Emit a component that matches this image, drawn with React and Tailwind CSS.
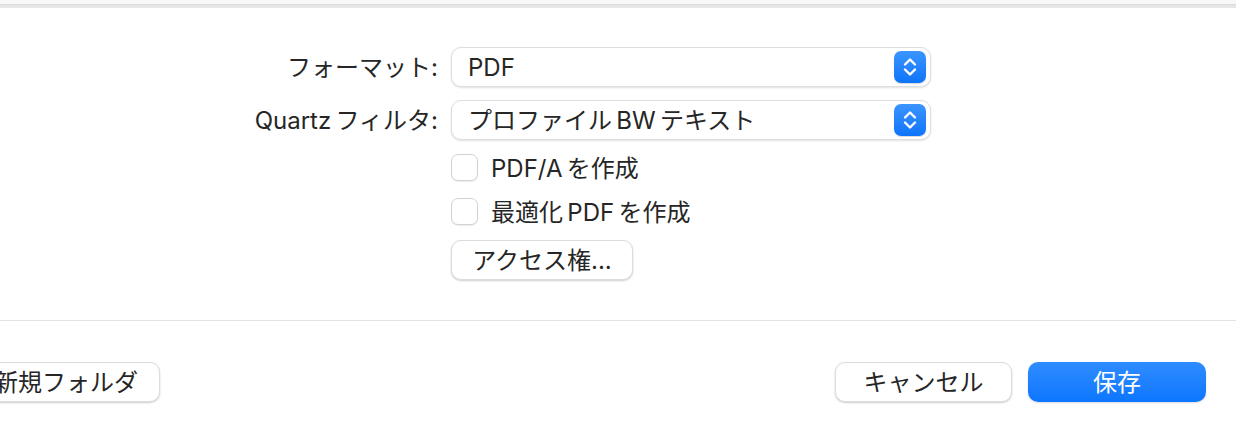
const font = {
  fontFamily: 'Inter, "Noto Sans CJK JP", sans-serif',
};

function Stepper() {
  return (
    <span className="flex h-[32px] w-[32px] items-center justify-center rounded-[7px] bg-gradient-to-b from-[#3a95ff] to-[#0b74fa] shadow-[0_1px_1px_rgba(0,0,0,0.15)]">
      <svg width="18" height="24" viewBox="0 0 18 24" fill="none">
        <path d="M4 9.5 L9 4.5 L14 9.5" stroke="white" strokeWidth="2.4" strokeLinecap="round" strokeLinejoin="round" />
        <path d="M4 14.5 L9 19.5 L14 14.5" stroke="white" strokeWidth="2.4" strokeLinecap="round" strokeLinejoin="round" />
      </svg>
    </span>
  );
}

function Popup({ value }) {
  return (
    <div className="flex h-[40px] w-[480px] items-center justify-between rounded-[10px] border border-[#dedede] bg-white pl-[16px] pr-[4px] shadow-[0_1px_2px_rgba(0,0,0,0.12)]">
      <span className="pt-[2px] text-[24px] leading-none text-[#262626]">{value}</span>
      <Stepper />
    </div>
  );
}

function Checkbox({ label }) {
  return (
    <div className="flex h-[27px] items-center gap-[13px]">
      <span className="h-[27px] w-[27px] rounded-[7px] border border-[#d3d3d3] bg-white shadow-[0_1px_1px_rgba(0,0,0,0.08)]" />
      <span className="pt-[2px] text-[24px] leading-none text-[#262626]">{label}</span>
    </div>
  );
}

function Button({ children, className = "" }) {
  return (
    <button className={"flex h-[40px] items-center justify-center rounded-[10px] border border-[#dcdcdc] bg-white pt-[2px] text-[24px] leading-none text-[#262626] shadow-[0_1px_2px_rgba(0,0,0,0.2)] " + className}>
      {children}
    </button>
  );
}

export default function App() {
  return (
    <div className="h-[436px] w-[1236px] overflow-hidden bg-white" style={font}>
      <div className="h-[4px] bg-[#f8f8f8]" />
      <div className="h-[1px] bg-[#dadada]" />
      <div className="h-[3px] bg-[#e6e6e6]" />

      <div className="grid grid-cols-[438px_480px] items-center gap-x-[13px] gap-y-[13px] pt-[39px]">
        <span className="pt-[2px] text-right text-[24px] leading-none text-[#262626]">フォーマット:</span>
        <Popup value="PDF" />
        <span className="pt-[2px] text-right text-[24px] leading-none text-[#262626]">Quartz{"\u2009"}フィルタ:</span>
        <Popup value={"プロファイル\u2009BW\u2009テキスト"} />
      </div>

      <div className="ml-[451px] flex flex-col gap-[17px] pt-[14px]">
        <Checkbox label={"PDF/A\u2009を作成"} />
        <Checkbox label={"最適化\u2009PDF\u2009を作成"} />
      </div>

      <div className="ml-[451px] pt-[15px]">
        <Button className="w-[182px]">アクセス権...</Button>
      </div>

      <div className="mt-[40px] h-[1px] bg-[#e3e3e3]" />

      <div className="flex items-center pt-[41px]">
        <Button className="ml-[-28px] w-[188px]">新規フォルダ</Button>
        <div className="ml-auto flex gap-[16px] pr-[30px]">
          <Button className="w-[177px]">キャンセル</Button>
          <button className="flex h-[40px] w-[178px] items-center justify-center rounded-[10px] bg-gradient-to-b from-[#2e8cff] to-[#0a76ff] pt-[2px] text-[24px] leading-none text-white shadow-[0_1px_2px_rgba(0,0,0,0.15)]">
            保存
          </button>
        </div>
      </div>
    </div>
  );
}
